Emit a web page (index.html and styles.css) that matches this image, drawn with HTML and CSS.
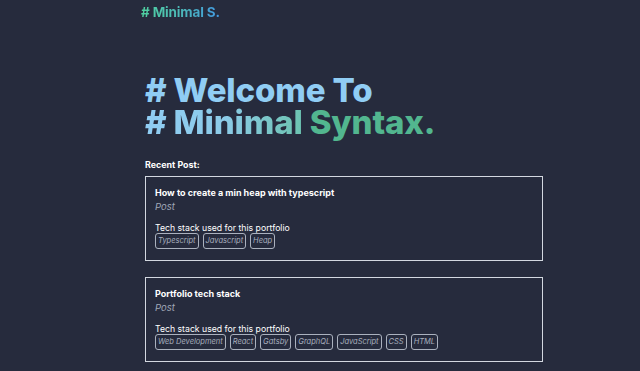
FILE: index.html
```html
<!DOCTYPE html>
<html>
<head>
<meta charset="utf-8">
<link rel="stylesheet" href="styles.css">
</head>
<body>
<header class="top">
  <a class="logo">#&nbsp;Minimal S.</a>
</header>
<main class="main">
  <h1 class="hero">
    <span class="hero-line1"># Welcome To</span>
    <span class="hero-line2"><span class="hero-blue"># Minimal</span> <span class="hero-green">Syntax.</span></span>
  </h1>
  <h2 class="section-title">Recent Post:</h2>
  <div class="posts">
    <article class="card">
      <h3 class="card-title">How to create a min heap with typescript</h3>
      <p class="card-type">Post</p>
      <p class="card-desc">Tech stack used for this portfolio</p>
      <div class="tags">
        <span class="tag">Typescript</span>
        <span class="tag">Javascript</span>
        <span class="tag">Heap</span>
      </div>
    </article>
    <article class="card">
      <h3 class="card-title">Portfolio tech stack</h3>
      <p class="card-type">Post</p>
      <p class="card-desc">Tech stack used for this portfolio</p>
      <div class="tags">
        <span class="tag">Web Development</span>
        <span class="tag">React</span>
        <span class="tag">Gatsby</span>
        <span class="tag">GraphQL</span>
        <span class="tag">JavaScript</span>
        <span class="tag">CSS</span>
        <span class="tag">HTML</span>
      </div>
    </article>
  </div>
</main>
</body>
</html>
```

FILE: styles.css
```css
* { box-sizing: border-box; }
html, body {
  margin: 0;
  padding: 0;
  background: #262b3d;
  color: #ffffff;
  font-family: Inter, "Noto Sans", sans-serif;
  overflow: hidden;
}
.top {
  height: 24px;
  display: flex;
  align-items: center;
  padding-left: 141px;
}
.logo {
  font-size: 13.5px;
  font-weight: 700;
  letter-spacing: -0.15px;
  background: linear-gradient(90deg, #4fd1a0 0%, #4cb8b8 50%, #4299e1 100%);
  -webkit-background-clip: text;
  background-clip: text;
  color: transparent;
  line-height: 24px;
}
.main {
  width: 398px;
  margin-left: 145px;
  padding-top: 50px;
}
.hero {
  margin: 0;
  font-size: 33px;
  font-weight: 800;
  line-height: 32px;
  letter-spacing: -0.15px;
}
.hero-line1 {
  display: block;
  color: #90cdf4;
}
.hero-line2 {
  display: block;
}
.hero-blue {
  background: linear-gradient(90deg, #90cdf4 0%, #8ccbe8 50%, #6cc3b0 100%);
  -webkit-background-clip: text;
  background-clip: text;
  color: transparent;
}
.hero-green {
  color: #52b68f;
}
.section-title {
  margin: 21px 0 0;
  font-size: 8.9px;
  font-weight: 700;
  line-height: 12px;
}
.posts {
  display: flex;
  flex-direction: column;
  gap: 16px;
  margin-top: 5px;
}
.card {
  border: 1.5px solid #d3d8e0;
  padding: 9px 9px 11px 9px;
}
.card-title {
  margin: 0;
  font-size: 9px;
  font-weight: 700;
  line-height: 14px;
}
.card-type {
  margin: 0;
  font-size: 9.5px;
  font-style: italic;
  color: #a0a8b8;
  line-height: 14px;
}
.card-desc {
  margin: 8px 0 0;
  font-size: 8.7px;
  line-height: 12px;
}
.tags {
  display: flex;
  flex-wrap: wrap;
  gap: 4px;
  margin-top: -1px;
}
.tag {
  border: 1px solid #aab1be;
  border-radius: 3px;
  padding: 0 2px;
  font-size: 7.5px;
  font-style: italic;
  color: #a8afbd;
  line-height: 14px;
}
```
